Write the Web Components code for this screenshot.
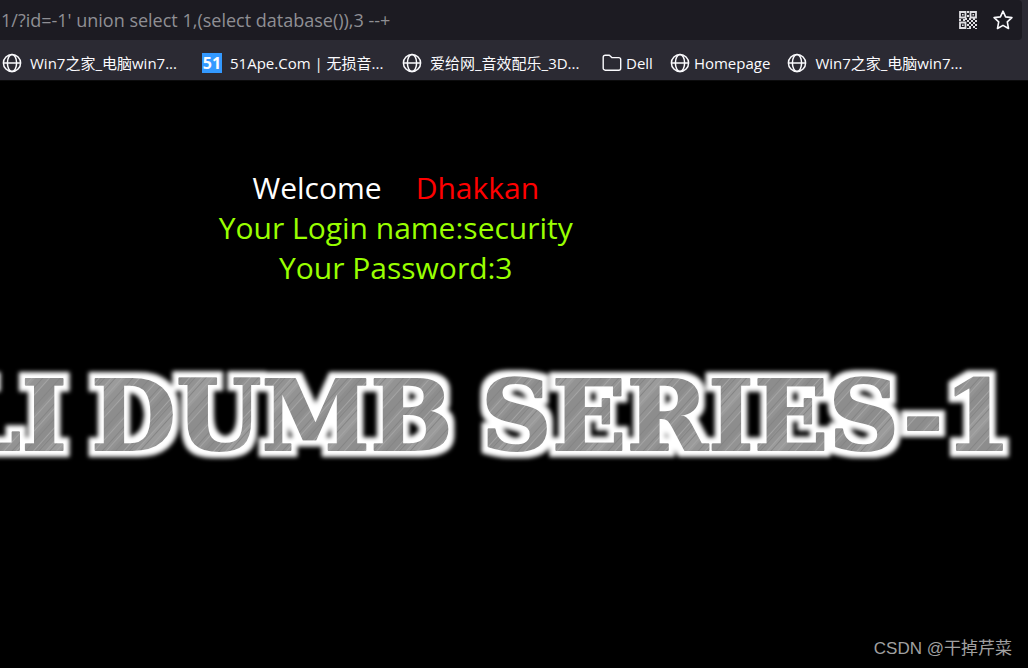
<!DOCTYPE html>
<html lang="en">
<head>
<meta charset="utf-8">
<title>Less-1</title>
<style>
    html {
        background: #000000;
    }

    body {
        margin: 0;
        font-family: "Open Sans", "Noto Sans CJK SC", sans-serif;
        color: #fbfbfe;
        overflow-x: hidden;
    }
</style>
</head>
<body>
<app-window></app-window>

<script>
class BarIcon extends HTMLElement {
    constructor() {
        super();
        this.attachShadow({ mode: 'open' });
    }

    connectedCallback() {
        const icons = {
            globe: `
                <g fill="none" stroke="currentColor" stroke-width="1.5">
                    <circle cx="10" cy="10" r="8.6"/>
                    <ellipse cx="10" cy="10" rx="4.6" ry="8.6"/>
                    <path d="M1.5 10h17"/>
                </g>`,
            folder: `
                <path fill="none" stroke="currentColor" stroke-width="1.4" stroke-linejoin="round"
                    d="M1.2 4.2a2 2 0 0 1 2-2h4.2l2.4 2.4h6.9a2 2 0 0 1 2 2v8.6a2 2 0 0 1-2 2H3.2a2 2 0 0 1-2-2z"/>`,
            star: `
                <path fill="none" stroke="currentColor" stroke-width="1.6" stroke-linejoin="round"
                    d="M10 1.2l2.6 5.7 6.3.7-4.6 4.3 1.2 6.6L10 15.4l-5.5 3.1 1.2-6.6L1.1 7.6l6.3-.7z"/>`,
            qr: `
                <g fill="none" stroke="currentColor" stroke-width="1.8">
                    <path d="M2 2h5.5v5.5H2zM12.5 2H18v5.5h-5.5zM2 12.5h5.5V18H2z"/>
                </g>
                <path fill="currentColor" d="M4 4h1.6v1.6H4zM14.5 4h1.6v1.6h-1.6zM4 14.5h1.6v1.6H4z
                    M9 1h2v2H9zM9 5h2v2H9zM1 9h2v2H1zM5 9h2v2H5zM7 8h2v2H7zM9 10h2v2H9zM11 8h2v2h-2z
                    M13 10h2v2h-2zM15 8h2v2h-2zM17 10h2v2h-2zM9 14h2v2H9zM11 12h2v2h-2zM15 12h2v2h-2z
                    M13 14h2v2h-2zM17 14h2v2h-2zM11 16h2v3h-2zM15 16h2v2h-2zM9 18h2v1H9zM17 18h2v1h-2z"/>`
        };
        this.shadowRoot.innerHTML = /*html*/ `
            <style>
                :host {
                    display: block;
                    flex: none;
                    width: 20px;
                    height: 20px;
                }

                svg {
                    display: block;
                    width: 100%;
                    height: 100%;
                }
            </style>
            <svg viewBox="0 0 20 20" aria-hidden="true">${icons[this.getAttribute('name')]}</svg>
        `;
    }
}

class AddressBar extends HTMLElement {
    constructor() {
        super();
        this.attachShadow({ mode: 'open' });
    }

    connectedCallback() {
        this.shadowRoot.innerHTML = /*html*/ `
            <style>
                :host {
                    display: block;
                    background: #2b2a33;
                    padding-right: 6px;
                }

                .field {
                    display: flex;
                    align-items: center;
                    gap: 15px;
                    height: 40px;
                    padding-right: 9px;
                    background: #1c1b22;
                    border-radius: 0 4px 4px 0;
                }

                input {
                    flex: 1;
                    min-width: 0;
                    padding: 0 0 0 1px;
                    border: none;
                    outline: none;
                    background: none;
                    font: 18px/24px "Open Sans", sans-serif;
                    color: #8f8f94;
                }

                button {
                    padding: 0;
                    border: none;
                    background: none;
                    color: #fbfbfe;
                }

                .qr {
                    color: #dedee2;
                }
            </style>
            <div class="field">
                <input type="text" aria-label="Address" value="1/?id=-1' union select 1,(select database()),3 --+">
                <button type="button" class="qr" aria-label="QR code"><bar-icon name="qr"></bar-icon></button>
                <button type="button" aria-label="Bookmark this page"><bar-icon name="star"></bar-icon></button>
            </div>
        `;
    }
}

class BookmarkItem extends HTMLElement {
    constructor() {
        super();
        this.attachShadow({ mode: 'open' });
    }

    connectedCallback() {
        const icon = this.getAttribute('icon');
        this.shadowRoot.innerHTML = /*html*/ `
            <style>
                :host {
                    display: block;
                    flex: none;
                }

                a {
                    display: flex;
                    align-items: center;
                    gap: 4px;
                    font-size: 15px;
                    line-height: 20px;
                    color: #fbfbfe;
                    text-decoration: none;
                    white-space: nowrap;
                }

                :host([wide]) a {
                    gap: 8px;
                    width: 183px;
                }

                .badge {
                    width: 20px;
                    background: #3399ff;
                    font-size: 16px;
                    font-weight: bold;
                    text-align: center;
                }
            </style>
            <a href="#">
                ${icon === '51' ? '<span class="badge">51</span>' : `<bar-icon name="${icon}"></bar-icon>`}
                <span><slot></slot></span>
            </a>
        `;
    }
}

class BookmarksBar extends HTMLElement {
    constructor() {
        super();
        this.attachShadow({ mode: 'open' });
    }

    connectedCallback() {
        this.shadowRoot.innerHTML = /*html*/ `
            <style>
                :host {
                    display: block;
                    background: #2b2a33;
                    border-bottom: 1px solid #0c0c0d;
                }

                nav {
                    display: flex;
                    align-items: center;
                    gap: 17px;
                    padding: 13px 0 7px 2px;
                    overflow: hidden;
                }
            </style>
            <nav aria-label="Bookmarks">
                <bookmark-item icon="globe" wide>Win7之家_电脑win7...</bookmark-item>
                <bookmark-item icon="51" wide>51Ape.Com | 无损音...</bookmark-item>
                <bookmark-item icon="globe" wide>爱给网_音效配乐_3D...</bookmark-item>
                <bookmark-item icon="folder">Dell</bookmark-item>
                <bookmark-item icon="globe">Homepage</bookmark-item>
                <bookmark-item icon="globe" wide>Win7之家_电脑win7...</bookmark-item>
            </nav>
        `;
    }
}

class LoginResult extends HTMLElement {
    constructor() {
        super();
        this.attachShadow({ mode: 'open' });
    }

    connectedCallback() {
        this.shadowRoot.innerHTML = /*html*/ `
            <style>
                :host {
                    display: block;
                    width: 77%;
                    padding-top: 87px;
                    font-size: 30px;
                    line-height: 40px;
                    text-align: center;
                }

                p {
                    margin: 0;
                    color: #99ff00;
                }

                .welcome {
                    display: flex;
                    justify-content: center;
                    gap: 34px;
                    color: #ffffff;
                }

                .user {
                    color: #ff0000;
                }
            </style>
            <p class="welcome"><span>Welcome</span><span class="user">Dhakkan</span></p>
            <p>Your Login name:security</p>
            <p>Your Password:3</p>
        `;
    }
}

class MetalBanner extends HTMLElement {
    constructor() {
        super();
        this.attachShadow({ mode: 'open' });
    }

    connectedCallback() {
        this.shadowRoot.innerHTML = /*html*/ `
            <style>
                :host {
                    display: block;
                    margin-top: 71px;
                }

                svg {
                    display: block;
                    width: 100%;
                }

                text {
                    font: bold 98px "DejaVu Serif", serif;
                    fill: url(#brushed);
                    stroke: url(#brushed);
                    stroke-width: 2px;
                    stroke-linejoin: round;
                    filter: url(#glow);
                }
            </style>
            <svg viewBox="0 0 1028 120" role="img" aria-label="LI DUMB SERIES-1">
                <defs>
                    <pattern id="brushed" patternUnits="userSpaceOnUse" width="67" height="67" patternTransform="rotate(42)">
                        <rect width="67" height="67" fill="#939393"/>
                        <path stroke="#8d8d8d" stroke-width="12" d="M16 0v67M56 0v67"/>
                        <path stroke="#9b9b9b" stroke-width="10" d="M34 0v67"/>
                        <path stroke="#858585" stroke-width="1" d="M3.5 0v67M13.5 0v67M23.5 0v67M31.5 0v67M44.5 0v67M57.5 0v67"/>
                        <path stroke="#a4a4a4" stroke-width="1" d="M6.5 0v67M19.5 0v67M28.5 0v67M36.5 0v67M49.5 0v67M64.5 0v67"/>
                    </pattern>
                    <filter id="glow" filterUnits="userSpaceOnUse" x="-200" y="0" width="1300" height="120">
                        <feMorphology in="SourceAlpha" operator="dilate" radius="6" result="fat"/>
                        <feGaussianBlur in="fat" stdDeviation="2" result="soft"/>
                        <feFlood flood-color="#ffffff"/>
                        <feComposite in2="soft" operator="in" result="halo"/>
                        <feMerge>
                            <feMergeNode in="halo"/>
                            <feMergeNode in="SourceGraphic"/>
                        </feMerge>
                    </filter>
                </defs>
                <text x="67" y="91" text-anchor="end">LI</text>
                <text x="91" y="91">DUMB</text>
                <text x="481" y="91">SERIES-1</text>
            </svg>
        `;
    }
}

class AppWindow extends HTMLElement {
    constructor() {
        super();
        this.attachShadow({ mode: 'open' });
    }

    connectedCallback() {
        this.shadowRoot.innerHTML = /*html*/ `
            <style>
                :host {
                    display: flex;
                    flex-direction: column;
                    min-height: 100vh;
                }

                main {
                    flex: 1;
                }

                footer {
                    padding: 0 16px 7px 0;
                    font: 17px/24px "Liberation Sans", "Noto Sans CJK SC", sans-serif;
                    color: #a0a0a0;
                    text-align: right;
                }
            </style>
            <address-bar></address-bar>
            <bookmarks-bar></bookmarks-bar>
            <main>
                <login-result></login-result>
                <metal-banner></metal-banner>
            </main>
            <footer>CSDN @干掉芹菜</footer>
        `;
    }
}

customElements.define('bar-icon', BarIcon);
customElements.define('address-bar', AddressBar);
customElements.define('bookmark-item', BookmarkItem);
customElements.define('bookmarks-bar', BookmarksBar);
customElements.define('login-result', LoginResult);
customElements.define('metal-banner', MetalBanner);
customElements.define('app-window', AppWindow);
</script>
</body>
</html>
